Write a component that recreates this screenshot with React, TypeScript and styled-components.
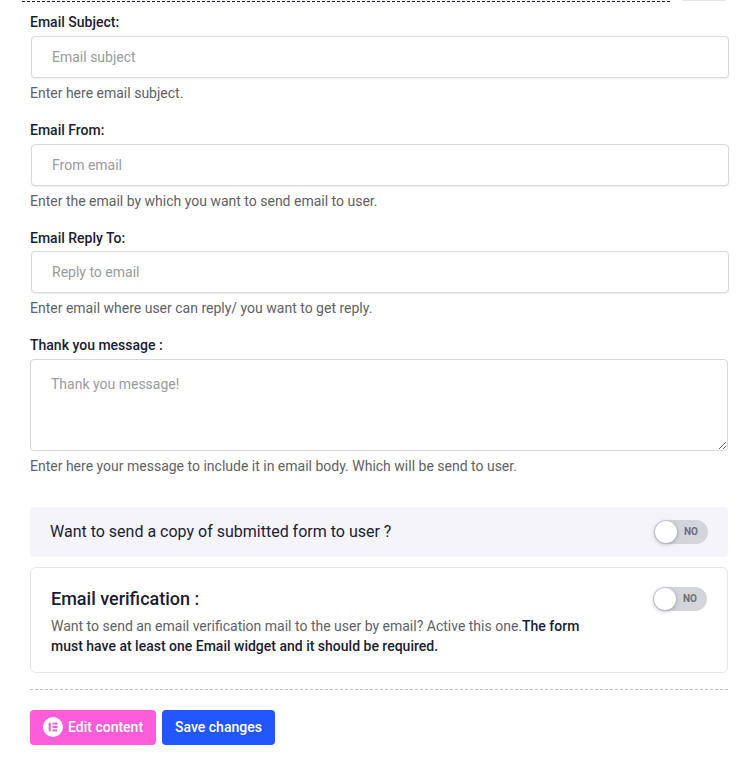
import React from "react";
import styled, { createGlobalStyle } from "styled-components";

const Global = createGlobalStyle`
  html, body { margin: 0; padding: 0; background: #fff; }
  body { font-family: Roboto, "Liberation Sans", sans-serif; font-size: 14px; color: #5f6369; }
  * { box-sizing: border-box; }
`;

const Page = styled.div`
  width: 755px;
  height: 771px;
  overflow: hidden;
  padding: 0 27px 0 30px;
`;

const TopStrip = styled.div`
  height: 2px;
  margin: 0 2px 0 -8px;
  display: flex;
  justify-content: space-between;
`;

const DashedRule = styled.div`
  width: 648px;
  height: 2px;
  border-bottom: 1px dashed #1a1d2b;
`;

const Tab = styled.div`
  width: 44px;
  height: 1px;
  background: #e4e5ec;
  border-radius: 0 0 3px 3px;
`;

const Field = styled.div<{ $first?: boolean }>`
  display: flex;
  flex-direction: column;
  margin-top: ${(p) => (p.$first ? "10.4px" : "17px")};
`;

const Label = styled.label`
  font-size: 14px;
  line-height: 20px;
  font-weight: 500;
  color: #1a1d33;
  margin-bottom: 3.6px;
`;

const Input = styled.input`
  height: 42px;
  margin-left: 1px;
  width: 698px;
  padding: 0 20px;
  border: 1px solid #d9d9dc;
  border-radius: 4px;
  background: #fff;
  box-shadow: 0 1px 2px rgba(0, 0, 0, 0.08);
  font: 400 14px Roboto, sans-serif;
  outline: none;
  &::placeholder { color: #9a9b9f; opacity: 1; }
`;

const TextArea = styled.textarea`
  height: 92px;
  width: 698px;
  padding: 14px 20px;
  display: block;
  border: 1px solid #d9d9dc;
  border-radius: 4px;
  background: #fff;
  font: 400 14px/20px Roboto, sans-serif;
  outline: none;
  &::placeholder { color: #9a9b9f; opacity: 1; }
`;

const Hint = styled.p`
  margin: 5px 0 0;
  font-size: 14px;
  line-height: 20px;
  color: #5f6268;
`;

const ToggleRow = styled.div`
  margin-top: 31.2px;
  height: 50px;
  width: 698px;
  padding: 0 20px;
  background: #f4f4fa;
  border-radius: 4px;
  display: flex;
  align-items: center;
  justify-content: space-between;
  font-size: 16px;
  color: #1a1d33;
`;

const RowText = styled.span`
  padding-bottom: 1px;
`;

const Toggle = styled.span`
  position: relative;
  display: inline-block;
  width: 54px;
  height: 24px;
  border-radius: 12px;
  background: #d4d5da;
  flex: none;
  &::before {
    content: "";
    position: absolute;
    left: 1px;
    top: 1px;
    width: 22px;
    height: 22px;
    border-radius: 50%;
    background: #fff;
    box-shadow: 0 1px 4px rgba(60, 60, 80, 0.4);
  }
`;

const ToggleText = styled.span`
  position: absolute;
  right: 10px;
  top: 0;
  line-height: 24px;
  font-size: 10px;
  font-weight: 700;
  color: #6c6e76;
`;

const Card = styled.div`
  margin-top: 10px;
  width: 698px;
  height: 106px;
  padding: 19px 20px 0;
  border: 1px solid #e6e6e8;
  border-radius: 6px;
  display: flex;
  justify-content: space-between;
  align-items: flex-start;
`;

const CardBody = styled.div`
  width: 540px;
`;

const CardTitle = styled.h3`
  margin: 0 0 5px;
  font-size: 18px;
  line-height: 24px;
  font-weight: 500;
  color: #1a1d33;
`;

const CardText = styled.p`
  margin: 0;
  font-size: 14px;
  line-height: 20px;
  color: #5f6268;
  strong { font-weight: 500; color: #1a1d33; }
`;

const Divider = styled.div`
  margin-top: 16px;
  width: 698px;
  border-top: 1px dashed #c4c4c4;
`;

const Actions = styled.div`
  margin-top: 20px;
  display: flex;
  gap: 6px;
`;

const Button = styled.button<{ $bg: string }>`
  height: 35px;
  padding: 0 13px;
  border: 0;
  border-radius: 4px;
  background: ${(p) => p.$bg};
  color: #fff;
  font: 500 14px Roboto, sans-serif;
  display: inline-flex;
  align-items: center;
  gap: 5px;
`;

const ButtonLabel = styled.span`
  padding-bottom: 1px;
`;

const ElementorIcon = () => (
  <svg width="20" height="20" viewBox="0 0 20 20" aria-hidden="true">
    <circle cx="10" cy="10" r="10" fill="#fff" />
    <g fill="#ff5cdb">
      <rect x="5.7" y="5.6" width="2" height="8.8" />
      <rect x="9.5" y="5.6" width="4.8" height="2" />
      <rect x="9.5" y="9" width="4.8" height="2" />
      <rect x="9.5" y="12.4" width="4.8" height="2" />
    </g>
  </svg>
);

const Switch = () => (
  <Toggle>
    <ToggleText>NO</ToggleText>
  </Toggle>
);

const fields = [
  { label: "Email Subject:", placeholder: "Email subject", hint: "Enter here email subject." },
  { label: "Email From:", placeholder: "From email", hint: "Enter the email by which you want to send email to user." },
  { label: "Email Reply To:", placeholder: "Reply to email", hint: "Enter email where user can reply/ you want to get reply." },
];

export default function App() {
  return (
    <Page>
      <Global />
      <TopStrip>
        <DashedRule />
        <Tab />
      </TopStrip>
      {fields.map((f, i) => (
        <Field key={f.label} $first={i === 0}>
          <Label>{f.label}</Label>
          <Input placeholder={f.placeholder} />
          <Hint>{f.hint}</Hint>
        </Field>
      ))}
      <Field>
        <Label>Thank you message :</Label>
        <TextArea placeholder="Thank you message!" />
        <Hint>Enter here your message to include it in email body. Which will be send to user.</Hint>
      </Field>
      <ToggleRow>
        <RowText>Want to send a copy of submitted form to user ?</RowText>
        <Switch />
      </ToggleRow>
      <Card>
        <CardBody>
          <CardTitle>Email verification :</CardTitle>
          <CardText>
            Want to send an email verification mail to the user by email? Active this one.
            <strong>The form must have at least one Email widget and it should be required.</strong>
          </CardText>
        </CardBody>
        <Switch />
      </Card>
      <Divider />
      <Actions>
        <Button $bg="#ff5cdb">
          <ElementorIcon />
          <ButtonLabel>Edit content</ButtonLabel>
        </Button>
        <Button $bg="#2257ff">
          <ButtonLabel>Save changes</ButtonLabel>
        </Button>
      </Actions>
    </Page>
  );
}
